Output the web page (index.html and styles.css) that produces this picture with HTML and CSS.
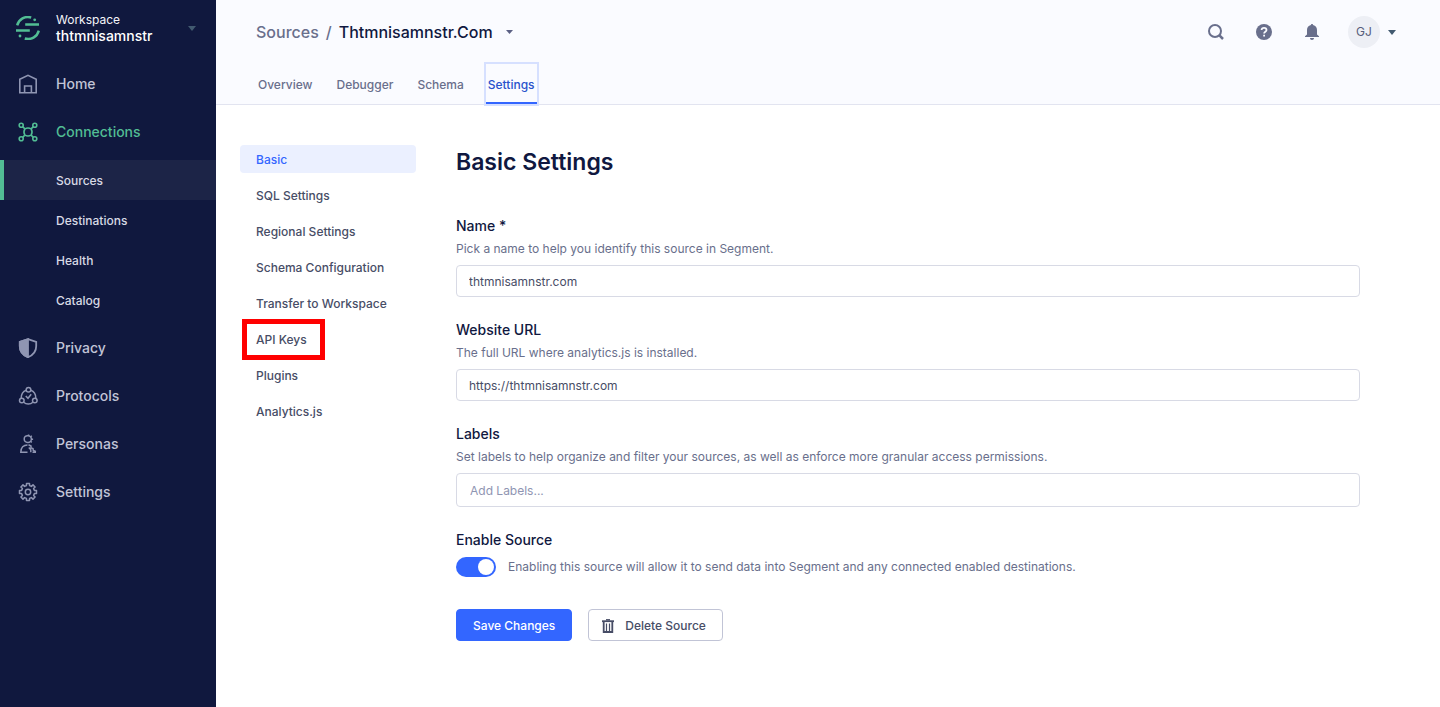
FILE: index.html
```html
<!DOCTYPE html>
<html lang="en">
<head>
<meta charset="utf-8">
<title>Sources - Basic Settings</title>
<meta name="viewport" content="width=device-width, initial-scale=1">
<link rel="stylesheet" href="styles.css">
</head>
<body>
<div class="app">
  <aside class="sidebar">
    <button class="workspace" type="button">
      <svg class="logo" width="24" height="24" viewBox="0 0 24 24" fill="none" stroke="currentColor" stroke-width="2.4">
        <path d="M1.200 9.400A11 11 0 0 1 15.200 1.500M22.800 14.600A11 11 0 0 1 8.800 22.500M9.200 8.500H23M0 14.500H13.800"/>
        <circle cx="18.700" cy="3.800" r="1.400" fill="currentColor" stroke="none"/>
        <circle cx="4" cy="20" r="1.400" fill="currentColor" stroke="none"/>
      </svg>
      <span class="workspace-text"><span>Workspace</span><span class="workspace-name">thtmnisamnstr</span></span>
      <svg class="workspace-caret" width="8" height="5" viewBox="0 0 8 5" fill="currentColor"><path d="M0 0h8L4 5z"/></svg>
    </button>
    <nav class="main-nav">
      <a class="nav-item" href="#">
        <svg width="20" height="20" viewBox="0 0 20 20" fill="none" stroke="currentColor" stroke-width="1.600"><path d="M1.800 5.200 10 1.300l8.200 3.900v13.600H1.800zM6.600 18.500V12h6.800v6.500"/></svg>
        Home</a>
      <a class="nav-item nav-item-active" href="#">
        <svg width="20" height="20" viewBox="0 0 20 20" fill="none" stroke="currentColor" stroke-width="1.600"><circle cx="3.200" cy="3.200" r="2"/><circle cx="16.800" cy="3.200" r="2"/><circle cx="3.200" cy="16.800" r="2"/><circle cx="16.800" cy="16.800" r="2"/><path d="m4.600 4.600 2.300 2.300m6.200 6.200 2.300 2.300m0-10.800-2.300 2.300m-6.200 6.200-2.300 2.300"/><path d="M6.900 6.900Q10 5 13.100 6.900 15 10 13.100 13.100 10 15 6.900 13.100 5 10 6.900 6.900z"/></svg>
        Connections</a>
      <a class="sub-item sub-item-active" href="#">Sources</a>
      <a class="sub-item" href="#">Destinations</a>
      <a class="sub-item" href="#">Health</a>
      <a class="sub-item" href="#">Catalog</a>
      <a class="nav-item nav-item-next" href="#">
        <svg width="20" height="20" viewBox="0 0 20 20" fill="none" stroke="currentColor" stroke-width="1.800"><path d="M10 1.200 18.200 4v4.200c0 5-3.200 8.900-8.200 11-5-2.100-8.200-6-8.200-11V4z"/><path d="M10 1.200v18C5 17.100 1.800 13.200 1.800 8.200V4z" fill="currentColor"/></svg>
        Privacy</a>
      <a class="nav-item" href="#">
        <svg width="20" height="20" viewBox="0 0 20 20" fill="none" stroke="currentColor" stroke-width="1.500"><circle cx="10.500" cy="3.700" r="2.300"/><circle cx="3.800" cy="14.500" r="2.300"/><circle cx="16.800" cy="14.500" r="2.300"/><path d="M8.200 4.200C5 5.300 3.200 8 3.200 12.200M12.800 4.200c3.200 1.100 5 3.800 5 8M5.700 16.200c2.500 2.300 6.700 2.300 9.200 0M7.800 10l2.200 2.300 3.200-4"/></svg>
        Protocols</a>
      <a class="nav-item" href="#">
        <svg width="20" height="20" viewBox="0 0 20 20" fill="none" stroke="currentColor" stroke-width="1.500"><path d="M10 1.700C7.500 1.500 6.200 3 6.200 5s1.400 3.700 3.800 3.500M9.500 11C5.500 11 2.800 13.500 2.800 18.300h6.700"/><path d="M10 1.700A3.400 3.400 0 0 1 10 8.500"/><path d="M10.500 2V.6M12.500 3l1.300-1.200M13.400 5.200h1.700M12.500 7.200l1.300 1.200"/><path d="m10.500 10.800 2.500 1.200v2l2 .5.300 2 2 .7v1.100M10.800 13.500l2 2.300v2.500M14.500 18.300h3.500"/></svg>
        Personas</a>
      <a class="nav-item" href="#">
        <svg width="20" height="20" viewBox="0 0 20 20" fill="none" stroke="currentColor" stroke-width="1.500" stroke-linejoin="round"><path d="M8.400 3.600 8.500 1.500h3l.1 2.100 1.800.8 1.600-1.500 2.100 2.100-1.500 1.600.8 1.800 2.100.1v3l-2.100.1-.8 1.800 1.500 1.600-2.100 2.100-1.600-1.500-1.800.8-.1 2.100h-3l-.1-2.100-1.800-.8-1.600 1.500-2.100-2.100 1.500-1.600-.8-1.800-2.100-.1v-3l2.100-.1.800-1.800-1.500-1.600 2.100-2.100 1.600 1.500z"/><circle cx="10" cy="10" r="2.700"/></svg>
        Settings</a>
    </nav>
  </aside>

  <div class="page">
    <header class="header">
      <div class="topbar">
        <div class="breadcrumb">
          <a class="crumb" href="#">Sources</a>
          <span class="crumb">/</span>
          <button class="crumb-current" type="button">Thtmnisamnstr.Com
            <svg width="7" height="4" viewBox="0 0 7 4" fill="#5b6084"><path d="M0 0h7L3.500 4z"/></svg>
          </button>
        </div>
        <div class="tools">
          <button class="icon-button" type="button" aria-label="Search"><svg width="16" height="16" viewBox="0 0 16 16" fill="none" stroke="currentColor"><circle cx="7" cy="7" r="6" stroke-width="2"/><path d="m11.200 11.200 3.800 3.800" stroke-width="2.500"/></svg></button>
          <button class="icon-button" type="button" aria-label="Help"><svg width="16" height="16" viewBox="0 0 16 16"><circle cx="8" cy="8" r="8" fill="currentColor"/><path d="M5.600 6.100C5.600 4.700 6.600 3.800 8 3.800s2.500.9 2.500 2.200c0 1.700-2.400 1.700-2.400 3.500" fill="none" stroke="#fafbff" stroke-width="1.800"/><path d="M7.200 10.700H9v1.800H7.200z" fill="#fafbff"/></svg></button>
          <button class="icon-button" type="button" aria-label="Notifications"><svg width="16" height="16" viewBox="0 0 16 16" fill="currentColor"><path d="M8 0c.7 0 1.100.4 1.100 1.100C11.600 1.600 13 3.500 13 6v4.500l2 1.700V13H1v-.8l2-1.700V6c0-2.500 1.400-4.400 3.900-4.900C6.900.4 7.300 0 8 0zM6 14h4c0 1.200-.8 2-2 2s-2-.8-2-2z"/></svg></button>
          <button class="account" type="button"><span class="avatar">GJ</span><svg width="8" height="5" viewBox="0 0 8 5" fill="#425a70"><path d="M0 0h8L4 5z"/></svg></button>
        </div>
      </div>
      <nav class="tabs">
        <a class="tab" href="#">Overview</a>
        <a class="tab" href="#">Debugger</a>
        <a class="tab" href="#">Schema</a>
        <a class="tab tab-active" href="#">Settings</a>
      </nav>
    </header>

    <div class="body">
      <nav class="section-nav">
        <a class="section-link section-link-active" href="#">Basic</a>
        <a class="section-link" href="#">SQL Settings</a>
        <a class="section-link" href="#">Regional Settings</a>
        <a class="section-link" href="#">Schema Configuration</a>
        <a class="section-link" href="#">Transfer to Workspace</a>
        <a class="section-link section-link-marked" href="#">API Keys</a>
        <a class="section-link" href="#">Plugins</a>
        <a class="section-link" href="#">Analytics.js</a>
      </nav>
      <main class="content">
        <h1 class="title">Basic Settings</h1>
        <form class="form">
          <div class="field">
            <label class="label" for="name">Name *</label>
            <p class="hint">Pick a name to help you identify this source in Segment.</p>
            <input class="input" id="name" type="text" value="thtmnisamnstr.com">
          </div>
          <div class="field">
            <label class="label" for="url">Website URL</label>
            <p class="hint">The full URL where analytics.js is installed.</p>
            <input class="input" id="url" type="text" value="https://thtmnisamnstr.com">
          </div>
          <div class="field">
            <label class="label" for="labels">Labels</label>
            <p class="hint">Set labels to help organize and filter your sources, as well as enforce more granular access permissions.</p>
            <input class="input input-tags" id="labels" type="text" placeholder="Add Labels...">
          </div>
          <div class="field">
            <label class="label" for="enable">Enable Source</label>
            <div class="toggle-row">
              <input class="toggle" id="enable" type="checkbox" checked>
              <p class="toggle-hint">Enabling this source will allow it to send data into Segment and any connected enabled destinations.</p>
            </div>
          </div>
          <div class="actions">
            <button class="button button-primary" type="button">Save Changes</button>
            <button class="button button-default" type="button">
              <svg width="14" height="14" viewBox="0 0 14 14" fill="none" stroke="currentColor"><path d="M1 2.200h12" stroke-width="1.800"/><path d="M5 .8h4" stroke-width="1.400"/><path d="M2.700 3v10h8.600V3" stroke-width="1.800"/><path d="M5.500 4.500v8M8.500 4.500v8" stroke-width="1.200"/></svg>
              Delete Source</button>
          </div>
        </form>
      </main>
    </div>
  </div>
</div>
</body>
</html>
```

FILE: styles.css
```css
* {
  box-sizing: border-box;
}

body {
  margin: 0;
  font-family: Inter, "Liberation Sans", sans-serif;
  font-size: 12px;
  line-height: 16px;
  color: #474d66;
  background: #fff;
}

a {
  color: inherit;
  text-decoration: none;
}

button {
  padding: 0;
  border: 0;
  background: none;
  font: inherit;
  color: inherit;
  cursor: pointer;
}

svg {
  display: block;
  flex: none;
}

.app {
  display: flex;
  min-height: 100vh;
}

/* Sidebar */
.sidebar {
  flex: none;
  width: 216px;
  background: #10183e;
}

.workspace {
  display: flex;
  align-items: center;
  gap: 16px;
  width: 100%;
  height: 56px;
  padding: 0 20px 0 16px;
  color: #f4f5f9;
  text-align: left;
}

.logo {
  color: #52bd94;
}

.workspace-text {
  display: flex;
  flex: 1;
  flex-direction: column;
}

.workspace-name {
  font-size: 14px;
  font-weight: 500;
  color: #fff;
}

.workspace-caret {
  color: #425a70;
}

.main-nav {
  display: flex;
  flex-direction: column;
  padding-top: 4px;
}

.nav-item {
  display: flex;
  align-items: center;
  gap: 18px;
  height: 48px;
  padding-left: 18px;
  font-size: 14px;
  font-weight: 500;
  color: #c1c4d6;
}

.nav-item svg {
  color: #8f95b2;
}

.nav-item-active,
.nav-item-active svg {
  color: #52bd94;
}

.nav-item-next {
  margin-top: 4px;
}

.sub-item {
  padding: 13px 0 11px 52px;
  border-left: 4px solid transparent;
  font-weight: 500;
  color: #d8dae5;
}

.sub-item-active {
  margin-top: 4px;
  border-left-color: #52bd94;
  background: #1c2447;
}

/* Header */
.page {
  flex: 1;
  min-width: 0;
}

.header {
  display: flex;
  flex-direction: column;
  border-bottom: 1px solid #e2e4f0;
  background: #fafbff;
}

.topbar {
  display: flex;
  align-items: center;
  justify-content: space-between;
  height: 64px;
  padding: 0 44px 0 40px;
}

.breadcrumb {
  display: flex;
  gap: 7px;
  font-size: 16px;
  font-weight: 500;
  line-height: 20px;
}

.crumb {
  color: #696f8c;
}

.crumb-current {
  display: flex;
  align-items: center;
  gap: 13px;
  color: #101840;
}

.tools {
  display: flex;
  align-items: center;
  gap: 32px;
}

.icon-button {
  color: #696f8c;
}

.account {
  display: flex;
  align-items: center;
  gap: 8px;
}

.tools .account {
  margin-left: -4px;
}

.avatar {
  display: grid;
  place-items: center;
  width: 32px;
  height: 32px;
  border-radius: 50%;
  background: #edeff5;
  color: #575d7a;
}

.tabs {
  display: flex;
  gap: 20px;
  padding-left: 40px;
}

.tab {
  height: 40px;
  padding: 13px 2px 9px;
  font-weight: 500;
  color: #696f8c;
}

.tab-active {
  border-bottom: 2px solid #3366ff;
  outline: 2px solid #d6e0ff;
  color: #2952cc;
}

/* Settings */
.body {
  display: flex;
  gap: 40px;
  padding: 40px 80px 40px 24px;
}

.section-nav {
  display: flex;
  flex: none;
  flex-direction: column;
  gap: 8px;
  width: 176px;
}

.section-link {
  position: relative;
  padding: 7px 16px 5px;
  border-radius: 4px;
  font-weight: 500;
}

.section-link-active {
  background: #ebf0ff;
  color: #3366ff;
}

.section-link-marked::after {
  content: "";
  position: absolute;
  top: -6px;
  left: 2px;
  box-sizing: border-box;
  width: 83px;
  height: 41px;
  border: 5px solid #f00;
}

.content {
  flex: 1;
  min-width: 0;
}

.title {
  margin: 0 0 37px;
  font-size: 23px;
  font-weight: 600;
  line-height: 34px;
  color: #101840;
}

.form {
  display: flex;
  flex-direction: column;
  gap: 23px;
}

.field {
  display: flex;
  flex-direction: column;
}

.label {
  font-size: 14px;
  font-weight: 500;
  line-height: 20px;
  color: #101840;
}

.hint,
.toggle-hint {
  margin: 0;
  color: #696f8c;
}

.hint {
  margin: 5px 0 8px;
}

.input {
  width: 100%;
  height: 32px;
  padding: 0 12px;
  border: 1px solid #d8dae5;
  border-radius: 4px;
  background: #fff;
  font: inherit;
  color: #474d66;
}

.input-tags {
  height: 34px;
  padding: 0 13px;
}

.input::placeholder {
  color: #8f95b2;
}

.toggle-row {
  display: flex;
  align-items: center;
  gap: 12px;
  margin-top: 7px;
}

.toggle {
  appearance: none;
  display: flex;
  flex: none;
  justify-content: flex-end;
  width: 40px;
  height: 20px;
  margin: 0;
  padding: 2px;
  border-radius: 10px;
  background: #3366ff;
}

.toggle::before {
  content: "";
  width: 16px;
  height: 16px;
  border-radius: 50%;
  background: #fff;
}

.toggle:not(:checked) {
  justify-content: flex-start;
  background: #c1c4d6;
}

.actions {
  display: flex;
  gap: 16px;
  margin-top: 9px;
}

.button {
  display: flex;
  align-items: center;
  gap: 10px;
  padding: 8px 16px 6px;
  border: 1px solid #c1c4d6;
  border-radius: 4px;
  font-weight: 500;
}

.button-primary {
  border-color: #3366ff;
  background: #3366ff;
  color: #fff;
}

.button-default {
  padding-left: 12px;
  background: #fff;
}
```
